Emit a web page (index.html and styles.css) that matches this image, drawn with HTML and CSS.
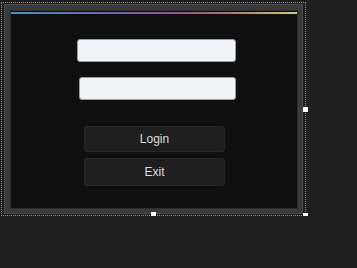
FILE: index.html
```html
<!DOCTYPE html>
<html>
  <head>
    <link rel="stylesheet" href="styles.css">
  </head>
  <body>
    <div class="designer">
      <div class="selection">
        <div class="form">
          <div class="client">
            <div class="accent"></div>
            <input class="textbox tb-user" type="text">
            <input class="textbox tb-pass" type="password">
            <button class="btn btn-login">Login</button>
            <button class="btn btn-exit">Exit</button>
          </div>
        </div>
        <span class="handle h-right"></span>
        <span class="handle h-bottom"></span>
        <span class="handle h-corner"></span>
      </div>
    </div>
  </body>
</html>
```
FILE: styles.css
```css
* {
  box-sizing: border-box;
}
body {
  margin: 0;
  background-color: #1f1f1f;
  font-family: "Liberation Sans", Arial, sans-serif;
}
.designer {
  padding: 2px 0 0 1px;
}
.selection {
  position: relative;
  width: 305px;
  height: 214px;
  border: 1px dotted #8c8c8c;
  padding: 1px 2px;
}
.form {
  width: 299px;
  height: 210px;
  background-color: #3a3a3a;
  border: 1px solid #4a4a4a;
  padding: 5px 4px 4px 5px;
}
.client {
  height: 100%;
  background-color: #101010;
  border: 1px solid #2c2c2c;
  display: flex;
  flex-direction: column;
  align-items: flex-start;
}
.accent {
  height: 2px;
  width: 286px;
  margin: 1px 0 0 0;
  background: linear-gradient(to right, #3f93b8, #6a6cb8 30%, #9a4c9c 55%, #b06f70 75%, #c8d670);
}
.textbox {
  height: 23px;
  border: 1px solid #9a9ea4;
  border-radius: 3px;
  background-color: #f0f4f9;
  margin: 0;
  padding: 0;
}
.tb-user {
  width: 159px;
  margin: 25px 0 0 66px;
}
.tb-pass {
  width: 157px;
  margin: 15px 0 0 68px;
}
.btn {
  width: 141px;
  margin: 0 0 0 73px;
  background-color: #1f1f1f;
  border: 1px solid #282828;
  border-radius: 3px;
  color: #dcdcdc;
  font-family: "Liberation Sans", Arial, sans-serif;
  font-size: 12px;
  padding: 0;
}
.btn-login {
  height: 26px;
  margin-top: 26px;
}
.btn-exit {
  height: 28px;
  margin-top: 6px;
}
.handle {
  position: absolute;
  width: 5px;
  height: 5px;
  background-color: #ffffff;
}
.h-right {
  left: 301px;
  top: 104px;
}
.h-bottom {
  left: 149px;
  top: 209px;
}
.h-corner {
  left: 301px;
  top: 210px;
}
```
